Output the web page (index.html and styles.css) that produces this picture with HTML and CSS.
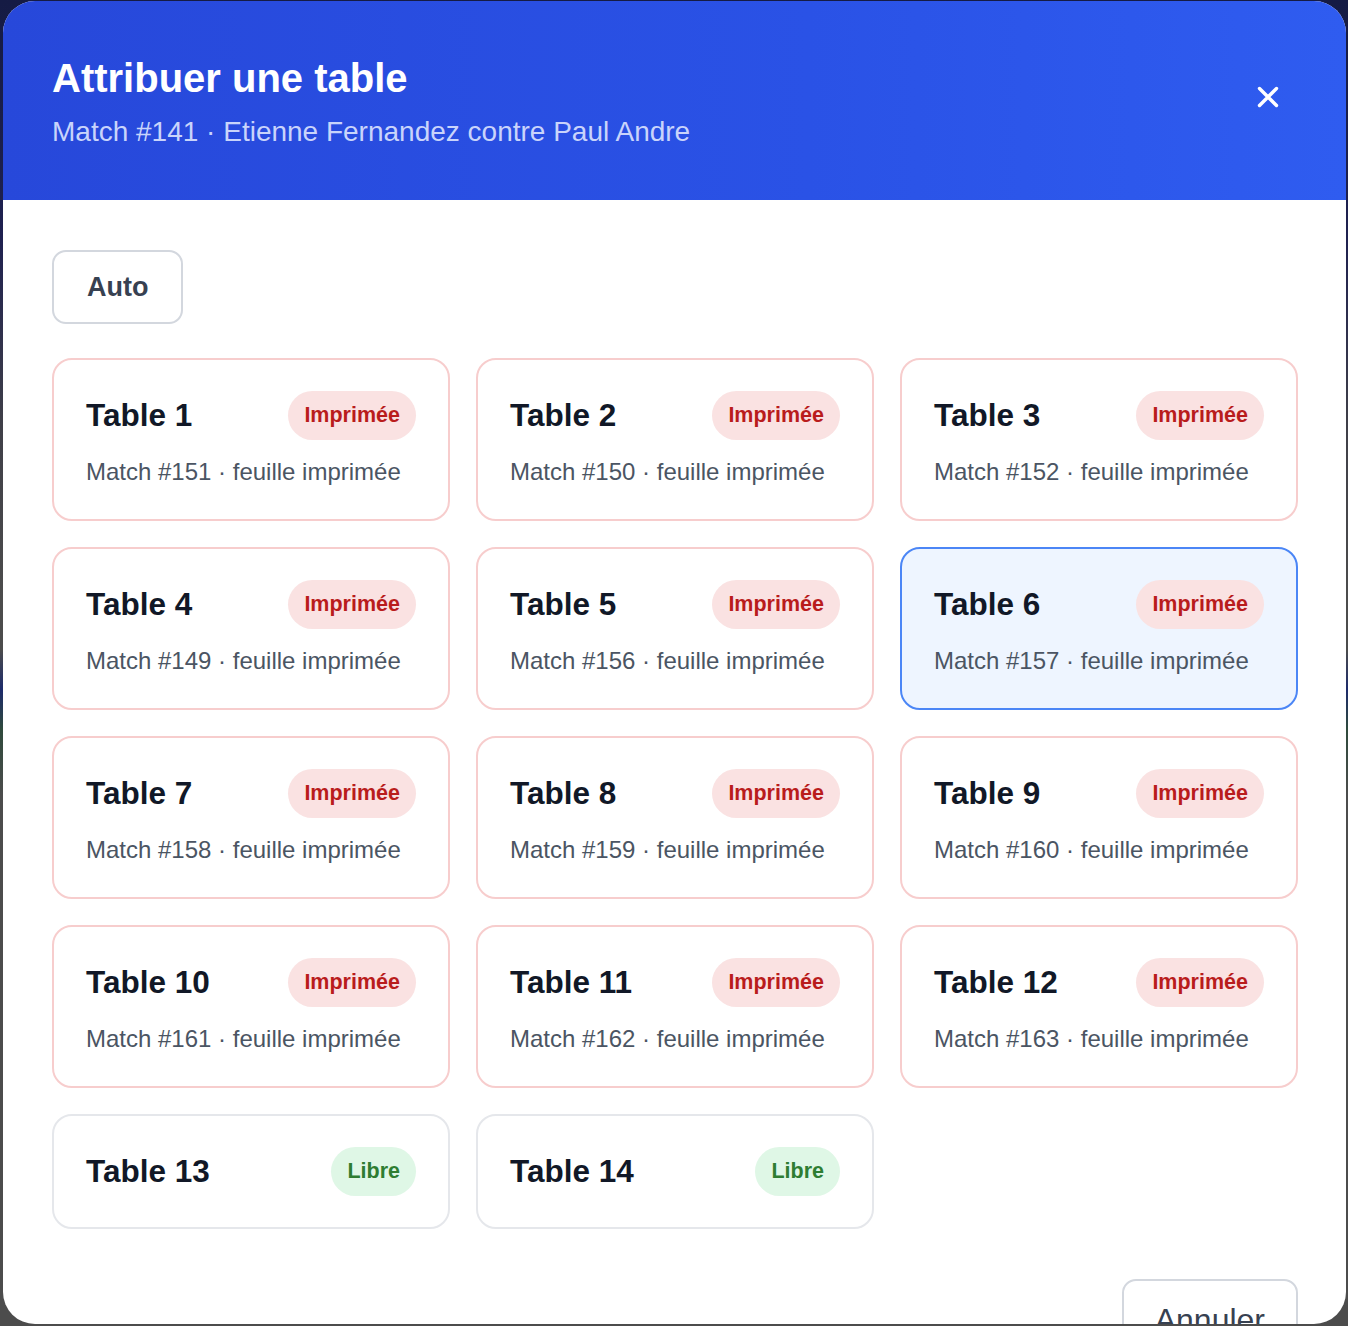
FILE: index.html
```html
<!DOCTYPE html>
<html lang="fr">
<head>
<meta charset="utf-8">
<title>Attribuer une table</title>
<link rel="stylesheet" href="styles.css">
</head>
<body>
<div class="backdrop">
  <div class="modal">
    <header class="modal-header">
      <div class="heading">
        <h1 class="title">Attribuer une table</h1>
        <p class="subtitle">Match #141 · Etienne Fernandez contre Paul Andre</p>
      </div>
      <button class="close" aria-label="Fermer">
        <svg width="24" height="24" viewBox="0 0 24 24" fill="none" stroke="#fff" stroke-width="3.4" stroke-linecap="round"><path d="M3.5 3.5 L20.5 20.5 M20.5 3.5 L3.5 20.5"/></svg>
      </button>
    </header>
    <div class="modal-body">
      <button class="btn auto">Auto</button>
      <div class="grid">
        <div class="card printed"><div class="card-head"><span class="card-title">Table 1</span><span class="badge red">Imprimée</span></div><p class="card-sub">Match #151 · feuille imprimée</p></div>
        <div class="card printed"><div class="card-head"><span class="card-title">Table 2</span><span class="badge red">Imprimée</span></div><p class="card-sub">Match #150 · feuille imprimée</p></div>
        <div class="card printed"><div class="card-head"><span class="card-title">Table 3</span><span class="badge red">Imprimée</span></div><p class="card-sub">Match #152 · feuille imprimée</p></div>
        <div class="card printed"><div class="card-head"><span class="card-title">Table 4</span><span class="badge red">Imprimée</span></div><p class="card-sub">Match #149 · feuille imprimée</p></div>
        <div class="card printed"><div class="card-head"><span class="card-title">Table 5</span><span class="badge red">Imprimée</span></div><p class="card-sub">Match #156 · feuille imprimée</p></div>
        <div class="card selected"><div class="card-head"><span class="card-title">Table 6</span><span class="badge red">Imprimée</span></div><p class="card-sub">Match #157 · feuille imprimée</p></div>
        <div class="card printed"><div class="card-head"><span class="card-title">Table 7</span><span class="badge red">Imprimée</span></div><p class="card-sub">Match #158 · feuille imprimée</p></div>
        <div class="card printed"><div class="card-head"><span class="card-title">Table 8</span><span class="badge red">Imprimée</span></div><p class="card-sub">Match #159 · feuille imprimée</p></div>
        <div class="card printed"><div class="card-head"><span class="card-title">Table 9</span><span class="badge red">Imprimée</span></div><p class="card-sub">Match #160 · feuille imprimée</p></div>
        <div class="card printed"><div class="card-head"><span class="card-title">Table 10</span><span class="badge red">Imprimée</span></div><p class="card-sub">Match #161 · feuille imprimée</p></div>
        <div class="card printed"><div class="card-head"><span class="card-title">Table 11</span><span class="badge red">Imprimée</span></div><p class="card-sub">Match #162 · feuille imprimée</p></div>
        <div class="card printed"><div class="card-head"><span class="card-title">Table 12</span><span class="badge red">Imprimée</span></div><p class="card-sub">Match #163 · feuille imprimée</p></div>
        <div class="card free"><div class="card-head"><span class="card-title">Table 13</span><span class="badge green">Libre</span></div></div>
        <div class="card free"><div class="card-head"><span class="card-title">Table 14</span><span class="badge green">Libre</span></div></div>
      </div>
      <div class="footer">
        <button class="btn cancel">Annuler</button>
      </div>
    </div>
  </div>
</div>
</body>
</html>
```

FILE: styles.css
```css
* { box-sizing: border-box; }
html, body {
  margin: 0;
  height: 100%;
  overflow: hidden;
}
body {
  font-family: "Liberation Sans", Arial, sans-serif;
  background: linear-gradient(to bottom, #151b44 0%, #1f2150 18%, #3f3f48 32%, #4c4c4c 45%, #4c4c4c 49%, #1d2b6b 52%, #2f4a3c 55%, #4c4c4c 60%, #4c4c4c 100%);
}
.backdrop {
  height: 100%;
  padding: 1px 2px 2px 3px;
}
.modal {
  height: 100%;
  background: #fff;
  border-radius: 32px;
  overflow: hidden;
  display: flex;
  flex-direction: column;
}
.modal-header {
  flex: none;
  background: linear-gradient(90deg, #2748da 0%, #2a52e6 60%, #2f5cf0 100%);
  padding: 53px 56px 50px 49px;
  display: flex;
  justify-content: space-between;
  align-items: center;
}
.title {
  margin: 0;
  color: #fff;
  font-size: 40px;
  line-height: 48px;
  font-weight: 700;
}
.subtitle {
  margin: 12px 0 0;
  color: #c9d4fb;
  font-size: 28px;
  line-height: 36px;
}
.close {
  width: 44px;
  height: 44px;
  border: 0;
  background: transparent;
  padding: 0;
  display: flex;
  align-items: center;
  justify-content: center;
  margin-bottom: 10px;
  cursor: pointer;
}
.modal-body {
  padding: 50px 48px 0 49px;
}
.btn {
  font-family: "Liberation Sans", Arial, sans-serif;
  background: #fff;
  border: 2px solid #d3d7de;
  border-radius: 14px;
  color: #374151;
  cursor: pointer;
}
.auto {
  height: 74px;
  padding: 0 33px;
  font-size: 27px;
  font-weight: 700;
}
.grid {
  margin-top: 34px;
  display: grid;
  grid-template-columns: repeat(3, 1fr);
  gap: 26px;
}
.card {
  border: 2px solid #e5e7eb;
  border-radius: 20px;
  padding: 31px 32px;
  background: #fff;
}
.card.printed { border-color: #f7cdcd; }
.card.selected { border-color: #4b86f6; background: #eef5ff; }
.card-head {
  display: flex;
  justify-content: space-between;
  align-items: center;
  height: 49px;
}
.card-title {
  font-size: 31.5px;
  font-weight: 700;
  color: #111827;
}
.badge {
  height: 49px;
  padding: 0 16px;
  border-radius: 999px;
  display: inline-flex;
  align-items: center;
  font-size: 21.5px;
  font-weight: 700;
}
.badge.red { background: #fae2e2; color: #b91c1c; }
.badge.green { background: #dff7e6; color: #2e7d32; }
.card-sub {
  margin: 16px 0 0;
  font-size: 24px;
  line-height: 32px;
  color: #4b5563;
}
.footer {
  margin-top: 50px;
  display: flex;
  justify-content: flex-end;
}
.cancel {
  padding: 20px 31px;
  font-size: 32px;
  line-height: 38px;
}
```
